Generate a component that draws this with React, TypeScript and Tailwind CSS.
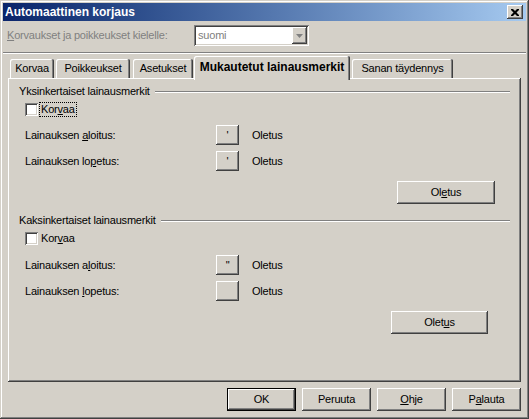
import React from "react";

const raised = "shadow-[inset_-1px_-1px_#404040,inset_1px_1px_#ffffff,inset_-2px_-2px_#808080]";
const sunken =
  "shadow-[inset_1px_1px_#808080,inset_-1px_-1px_#ffffff,inset_2px_2px_#404040,inset_-2px_-2px_#d4d0c8]";

function CloseButton() {
  return (
    <div className={`w-[16px] h-[14px] bg-[#d4d0c8] flex items-center justify-center ${raised}`}>
      <svg width="8" height="7" viewBox="0 0 8 7">
        <path d="M0 0h2l2 2 2-2h2v1L5.5 3.5 8 6v1H6L4 5 2 7H0V6l2.5-2.5L0 1z" fill="#000" />
      </svg>
    </div>
  );
}

function Checkbox() {
  return <div className={`w-[13px] h-[13px] bg-white shrink-0 ${sunken}`} />;
}

function GroupHeader({ title }: { title: string }) {
  return (
    <div className="h-[13px] flex items-center pl-[11px] pr-[11px]">
      <span>{title}</span>
      <div className="flex-1 ml-[5px] h-[2px] border-t border-[#808080] border-b border-b-white" />
    </div>
  );
}

function QuoteRow({ label, glyph }: { label: React.ReactNode; glyph: string }) {
  return (
    <div className="h-[20px] flex items-center">
      <span className="w-[208px] pl-[17px]">{label}</span>
      <div className={`w-[23px] h-[20px] flex items-center justify-center ${raised}`}>{glyph}</div>
      <span className="ml-[13px]">Oletus</span>
    </div>
  );
}

function Tab({ children, className }: { children: React.ReactNode; className: string }) {
  return (
    <div
      className={`mt-[3px] h-[19px] flex items-center justify-center rounded-t-[2px] shadow-[inset_-1px_0_#404040,inset_1px_1px_#ffffff,inset_-2px_0_#808080] ${className}`}
    >
      {children}
    </div>
  );
}

function DialogButton({ children, primary }: { children: React.ReactNode; primary?: boolean }) {
  return (
    <div
      className={`w-[69px] h-[23px] flex items-center justify-center ${
        primary
          ? "border border-black shadow-[inset_-1px_-1px_#404040,inset_1px_1px_#ffffff,inset_-2px_-2px_#808080]"
          : raised
      }`}
    >
      {children}
    </div>
  );
}

export default function App() {
  return (
    <div className="w-[529px] h-[419px] bg-[#d4d0c8] p-[3px] flex flex-col font-['Liberation_Sans',Arial,sans-serif] text-[11px] leading-[13px] tracking-[-0.2px] text-black shadow-[inset_-1px_-1px_#404040,inset_1px_1px_#d4d0c8,inset_-2px_-2px_#808080,inset_2px_2px_#ffffff]">
      <div className="h-[18px] flex items-center justify-between pl-[2px] pr-[3px] bg-linear-to-r from-[#0a246a] to-[#a6caf0]">
        <span className="text-white font-bold text-[12px] tracking-normal">Automaattinen korjaus</span>
        <CloseButton />
      </div>

      <div className="mt-[4px] h-[21px] flex items-center">
        <span className="w-[191px] pl-[4px] text-[#808080]">
          <u>K</u>orvaukset ja poikkeukset kielelle:
        </span>
        <div className={`w-[115px] h-[21px] p-[2px] flex ${sunken}`}>
          <div className="flex-1 bg-white flex items-center pl-[2px] text-[#808080]">suomi</div>
          <div className={`w-[15px] bg-[#d4d0c8] flex items-center justify-center ${raised}`}>
            <svg width="7" height="4" viewBox="0 0 7 4">
              <path d="M0 0h7L3.5 4z" fill="#808080" />
            </svg>
          </div>
        </div>
      </div>

      <div className="mt-[6px] h-[2px] border-t border-[#808080] border-b border-b-white" />

      <div className="px-[5px] flex flex-col">
        <div className="mt-[2px] h-[22px] flex items-start pl-[2px]">
          <Tab className="w-[44px]">Korvaa</Tab>
          <Tab className="ml-[2px] w-[74px]">Poikkeukset</Tab>
          <Tab className="ml-[3px] w-[60px]">Asetukset</Tab>
          <div className="ml-[1px] w-[156px] h-[24px] relative z-10 bg-[#d4d0c8] flex items-start pt-[5px] justify-center font-bold text-[12px] tracking-normal rounded-t-[2px] shadow-[inset_-1px_0_#404040,inset_1px_1px_#ffffff,inset_-2px_0_#808080]">
            Mukautetut lainausmerkit
          </div>
          <Tab className="ml-[2px] w-[101px]">Sanan täydennys</Tab>
        </div>

        <div className={`h-[304px] flex flex-col ${raised}`}>
          <div className="mt-[7px]">
            <GroupHeader title="Yksinkertaiset lainausmerkit" />
          </div>
          <div className="mt-[5px] h-[13px] flex items-center pl-[17px]">
            <Checkbox />
            <span className="ml-[2px] px-[1px] outline outline-1 outline-dotted outline-black">
              Kor<u>v</u>aa
            </span>
          </div>
          <div className="mt-[9px]">
            <QuoteRow
              glyph="'"
              label={
                <>
                  Lainauksen <u>a</u>loitus:
                </>
              }
            />
          </div>
          <div className="mt-[6px]">
            <QuoteRow
              glyph="'"
              label={
                <>
                  Lainauksen lo<u>p</u>etus:
                </>
              }
            />
          </div>
          <div className={`mt-[10px] ml-[389px] w-[98px] h-[23px] flex items-center justify-center ${raised}`}>
            <span>
              Ol<u>e</u>tus
            </span>
          </div>

          <div className="mt-[10px]">
            <GroupHeader title="Kaksinkertaiset lainausmerkit" />
          </div>
          <div className="mt-[5px] h-[13px] flex items-center pl-[17px]">
            <Checkbox />
            <span className="ml-[3px]">
              Kor<u>v</u>aa
            </span>
          </div>
          <div className="mt-[10px]">
            <QuoteRow
              glyph={'"'}
              label={
                <>
                  Lainauksen a<u>l</u>oitus:
                </>
              }
            />
          </div>
          <div className="mt-[6px]">
            <QuoteRow
              glyph=""
              label={
                <>
                  Lainauksen <u>l</u>opetus:
                </>
              }
            />
          </div>
          <div className={`mt-[10px] ml-[383px] w-[97px] h-[23px] flex items-center justify-center ${raised}`}>
            <span>
              Olet<u>u</u>s
            </span>
          </div>
        </div>

        <div className="mt-[6px] h-[23px] flex justify-end gap-[6px]">
          <DialogButton primary>OK</DialogButton>
          <DialogButton>Peruuta</DialogButton>
          <DialogButton>
            <span>
              <u>O</u>hje
            </span>
          </DialogButton>
          <DialogButton>
            <span>
              P<u>a</u>lauta
            </span>
          </DialogButton>
        </div>
      </div>
    </div>
  );
}
